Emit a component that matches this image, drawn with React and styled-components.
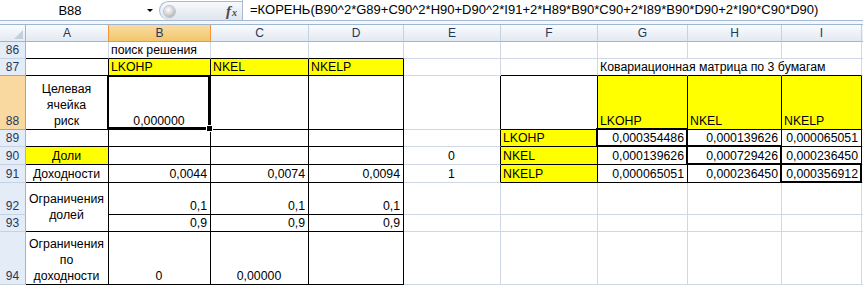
import React from 'react';
import styled, { createGlobalStyle, css } from 'styled-components';

const GlobalStyle = createGlobalStyle`
  html, body { margin: 0; padding: 0; background: #fff; }
  body { font-family: "Liberation Sans", Arial, sans-serif; }
`;

const Window = styled.div`
  width: 863px;
  height: 286px;
  overflow: hidden;
  background: #fff;
  display: flex;
  flex-direction: column;
`;

const FormulaBar = styled.div`
  display: flex;
  align-items: stretch;
  height: 20px;
  flex-shrink: 0;
  border-bottom: 1px solid #a7bad1;
  background: #fff;
`;

const NameBox = styled.div`
  width: 159px;
  display: flex;
  align-items: center;
  font-size: 13px;
  color: #000;
`;

const NameText = styled.span`
  width: 140px;
  text-align: center;
`;

const DropArrow = styled.span`
  width: 0;
  height: 0;
  margin-left: 7px;
  border-left: 3px solid transparent;
  border-right: 3px solid transparent;
  border-top: 3px solid #000;
`;

const FxPill = styled.div`
  width: 83px;
  margin-top: 1px;
  display: flex;
  align-items: center;
  justify-content: space-between;
  padding: 0 5px 0 4px;
  box-sizing: border-box;
  border: 1px solid #a9b9cd;
  border-right: none;
  border-bottom: none;
  border-radius: 10px 0 0 10px;
  background: linear-gradient(#f7f9fc, #dfe6ef);
`;

const FxKnob = styled.span`
  width: 11px;
  height: 11px;
  border-radius: 50%;
  background: radial-gradient(circle at 40% 35%, #ffffff 0%, #d6d6d6 45%, #9c9c9c 100%);
  box-shadow: 0 0 0 1px #b8c2cf;
`;

const FxLabel = styled.span`
  font-family: "Liberation Serif", "Times New Roman", serif;
  font-style: italic;
  font-weight: bold;
  color: #4a4a4a;
  font-size: 15px;
  line-height: 1;
  & small {
    font-size: 10px;
    margin-left: 1px;
  }
`;

const FormulaField = styled.div`
  flex: 1;
  border-left: 1px solid #a9b9cd;
  padding-left: 7px;
  font-size: 13px;
  line-height: 20px;
  color: #000;
  white-space: nowrap;
  overflow: hidden;
`;

const BarGap = styled.div`
  height: 3px;
  flex-shrink: 0;
  background: #f3f6fa;
  border-bottom: 1px solid #9eb6ce;
`;

const Sheet = styled.div`
  display: grid;
  grid-template-columns: 26px 83px 102px 98px 95px 97px 97px 90px 94px 80px 1fr;
  grid-template-rows: ${p => p.$rows};
  font-size: 12.3px;
`;

const Corner = styled.div`
  display: flex;
  align-items: flex-end;
  justify-content: flex-end;
  padding: 0 2px 2px 0;
  background: linear-gradient(#f9fbfd, #e4eaf3);
  border-right: 1px solid #9eb6ce;
  border-bottom: 1px solid #9eb6ce;
`;

const CornerMark = styled.span`
  width: 0;
  height: 0;
  border-left: 9px solid transparent;
  border-bottom: 9px solid #c3cfde;
`;

const ColHead = styled.div`
  display: flex;
  align-items: center;
  justify-content: center;
  font-size: 12px;
  color: #1e395b;
  background: linear-gradient(#f9fbfd, #e3e9f2);
  border-right: 1px solid #c5d2e1;
  border-bottom: 1px solid #9eb6ce;
  ${p => p.$sel && css`
    background: linear-gradient(#f9dba3, #f2c66b);
    border-right-color: #f29536;
    border-bottom-color: #f29536;
    box-shadow: -1px 0 0 #f29536;
  `}
  ${p => p.$last && css`border-right: none;`}
`;

const RowHead = styled.div`
  display: flex;
  align-items: flex-end;
  justify-content: center;
  font-size: 12px;
  line-height: 16px;
  color: #1e395b;
  background: #e4ecf7;
  border-right: 1px solid #9eb6ce;
  border-bottom: 1px solid #c5d2e1;
  ${p => p.$sel && css`
    background: #f9d99f;
    border-right-color: #f29536;
    border-bottom-color: #f29536;
    box-shadow: 0 -1px 0 #f29536;
  `}
`;

const LINE = { grid: '#d0d7e5', black: '#000', none: 'transparent' };
const JUSTIFY = { left: 'flex-start', center: 'center', right: 'flex-end' };

const Cell = styled.div`
  position: relative;
  display: flex;
  align-items: ${p => (p.$v === 'center' ? 'center' : 'flex-end')};
  justify-content: ${p => JUSTIFY[p.$h || 'left']};
  text-align: ${p => p.$h || 'left'};
  padding: 0 3px 0 2px;
  background: ${p => p.$fill || 'transparent'};
  border-right: 1px solid ${p => LINE[p.$r]};
  border-bottom: 1px solid ${p => LINE[p.$b]};
  line-height: 16px;
  color: #000;
  white-space: nowrap;
  grid-row: ${p => (p.$span ? `span ${p.$span}` : 'auto')};
  ${p => p.$thick && css`
    z-index: 1;
    &::after {
      content: '';
      position: absolute;
      left: -2px;
      top: -2px;
      right: -1px;
      bottom: -1px;
      border: 2px solid #000;
      pointer-events: none;
    }
  `}
`;

const Selection = styled.span`
  position: absolute;
  left: -2px;
  top: -1px;
  right: 0;
  bottom: 0;
  border: 2px solid #000;
  pointer-events: none;
  z-index: 2;
`;

const FillHandle = styled.span`
  position: absolute;
  right: -5px;
  bottom: -5px;
  width: 5px;
  height: 5px;
  background: #000;
  border: 1px solid #fff;
`;

const COLS = ['A', 'B', 'C', 'D', 'E', 'F', 'G', 'H', 'I', 'J'];
const ROWS = [
  { n: 86, h: 17 },
  { n: 87, h: 17 },
  { n: 88, h: 54 },
  { n: 89, h: 17 },
  { n: 90, h: 18 },
  { n: 91, h: 18 },
  { n: 92, h: 32 },
  { n: 93, h: 17 },
  { n: 94, h: 53 },
];

const Y = '#ffff00';

const DATA = {
  B86: { t: 'поиск решения' },
  B87: { t: 'LKOHP', fill: Y },
  C87: { t: 'NKEL', fill: Y },
  D87: { t: 'NKELP', fill: Y },
  G87: { t: 'Ковариационная матрица по 3 бумагам' },
  A88: { t: ['Целевая', 'ячейка', 'риск'], h: 'center' },
  B88: { t: '0,000000', h: 'center', sel: true },
  G88: { t: 'LKOHP', fill: Y },
  H88: { t: 'NKEL', fill: Y },
  I88: { t: 'NKELP', fill: Y },
  F89: { t: 'LKOHP', fill: Y },
  G89: { t: '0,000354486', h: 'right', thick: true },
  H89: { t: '0,000139626', h: 'right' },
  I89: { t: '0,000065051', h: 'right' },
  A90: { t: 'Доли', h: 'center', fill: Y },
  E90: { t: '0', h: 'center' },
  F90: { t: 'NKEL', fill: Y },
  G90: { t: '0,000139626', h: 'right' },
  H90: { t: '0,000729426', h: 'right', thick: true },
  I90: { t: '0,000236450', h: 'right' },
  A91: { t: 'Доходности', h: 'center' },
  B91: { t: '0,0044', h: 'right' },
  C91: { t: '0,0074', h: 'right' },
  D91: { t: '0,0094', h: 'right' },
  E91: { t: '1', h: 'center' },
  F91: { t: 'NKELP', fill: Y },
  G91: { t: '0,000065051', h: 'right' },
  H91: { t: '0,000236450', h: 'right' },
  I91: { t: '0,000356912', h: 'right', thick: true },
  A92: { t: ['Ограничения', 'долей'], h: 'center', v: 'center', span: 2 },
  B92: { t: '0,1', h: 'right' },
  C92: { t: '0,1', h: 'right' },
  D92: { t: '0,1', h: 'right' },
  A93: { skip: true },
  B93: { t: '0,9', h: 'right' },
  C93: { t: '0,9', h: 'right' },
  D93: { t: '0,9', h: 'right' },
  A94: { t: ['Ограничения', 'по', 'доходности'], h: 'center' },
  B94: { t: '0', h: 'center' },
  C94: { t: '0,00000', h: 'center' },
};

const ci = c => COLS.indexOf(c);
const inRange = (c, r, c1, c2, r1, r2) =>
  ci(c) >= ci(c1) && ci(c) <= ci(c2) && r >= r1 && r <= r2;

function rightLine(c, r) {
  if (c === 'G' && r === 87) return 'none';
  if (c === 'H' && r === 87) return 'none';
  if (inRange(c, r, 'A', 'D', 87, 94)) return 'black';
  if (inRange(c, r, 'E', 'I', 88, 91)) return 'black';
  if (c === 'J') return 'none';
  return 'grid';
}

function bottomLine(c, r) {
  if (inRange(c, r, 'A', 'D', 86, 94)) return 'black';
  if (inRange(c, r, 'F', 'I', 87, 91)) return 'black';
  if (c === 'A' && r === 92) return 'black';
  return 'grid';
}

function CellText({ t }) {
  if (Array.isArray(t)) {
    return (
      <span>
        {t.map((line, i) => (
          <React.Fragment key={i}>
            {i > 0 && <br />}
            {line}
          </React.Fragment>
        ))}
      </span>
    );
  }
  return t ? <span>{t}</span> : null;
}

const FORMULA =
  '=КОРЕНЬ(B90^2*G89+C90^2*H90+D90^2*I91+2*H89*B90*C90+2*I89*B90*D90+2*I90*C90*D90)';

export default function App() {
  const rowTemplate = ['17px', ...ROWS.map(r => `${r.h}px`)].join(' ');
  return (
    <>
      <GlobalStyle />
      <Window>
        <FormulaBar>
          <NameBox>
            <NameText>B88</NameText>
            <DropArrow />
          </NameBox>
          <FxPill>
            <FxKnob />
            <FxLabel>
              f<small>x</small>
            </FxLabel>
          </FxPill>
          <FormulaField>{FORMULA}</FormulaField>
        </FormulaBar>
        <BarGap />
        <Sheet $rows={rowTemplate}>
          <Corner>
            <CornerMark />
          </Corner>
          {COLS.map(c => (
            <ColHead key={c} $sel={c === 'B'} $last={c === 'J'}>
              {c === 'J' ? '' : c}
            </ColHead>
          ))}
          {ROWS.map(row => (
            <React.Fragment key={row.n}>
              <RowHead $sel={row.n === 88}>{row.n}</RowHead>
              {COLS.map(c => {
                const d = DATA[c + row.n] || {};
                if (d.skip) return null;
                return (
                  <Cell
                    key={c}
                    $h={d.h}
                    $v={d.v}
                    $fill={d.fill}
                    $span={d.span}
                    $thick={d.thick}
                    $r={rightLine(c, row.n)}
                    $b={bottomLine(c, d.span ? row.n + d.span - 1 : row.n)}
                  >
                    <CellText t={d.t} />
                    {d.sel && (
                      <Selection>
                        <FillHandle />
                      </Selection>
                    )}
                  </Cell>
                );
              })}
            </React.Fragment>
          ))}
        </Sheet>
      </Window>
    </>
  );
}
